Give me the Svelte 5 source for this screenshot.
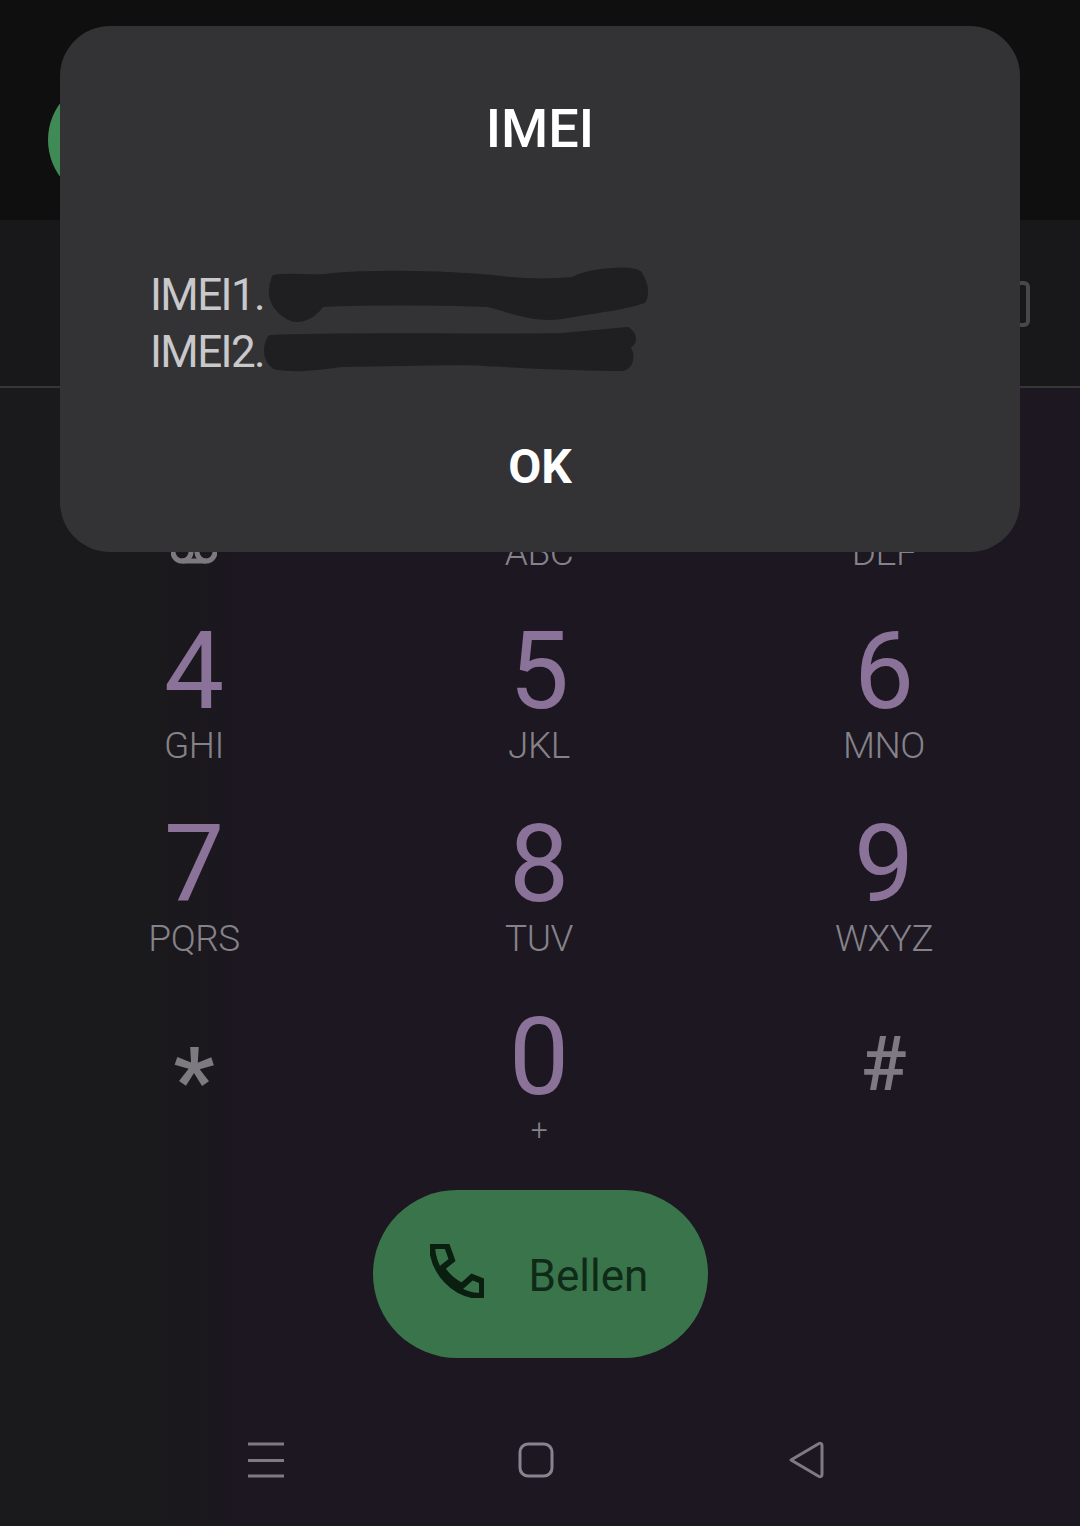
<script>
  let keys = [
    { digit: "", sub: "" },
    { digit: "", sub: "ABC" },
    { digit: "", sub: "DEF" },
    { digit: "4", sub: "GHI" },
    { digit: "5", sub: "JKL" },
    { digit: "6", sub: "MNO" },
    { digit: "7", sub: "PQRS" },
    { digit: "8", sub: "TUV" },
    { digit: "9", sub: "WXYZ" },
    { digit: "*", sub: "", symbol: "star" },
    { digit: "0", sub: "+" },
    { digit: "#", sub: "", symbol: "hash" }
  ];
</script>

<div class="screen">
  <header class="top">
    <div class="avatar"></div>
  </header>

  <div class="field">
    <div class="backspace"></div>
  </div>

  <div class="keypad">
    {#each keys as key, idx}
      <div class="key">
        {#if key.symbol}
          <span class="symbol {key.symbol}">{key.digit}</span>
        {:else}
          <span class="digit">{key.digit}</span>
        {/if}
        {#if idx === 0}
          <svg class="voicemail" width="46" height="46" viewBox="0 0 46 46" fill="none">
            <circle cx="11" cy="23" r="9" stroke="#7c797f" stroke-width="5" />
            <circle cx="35" cy="23" r="9" stroke="#7c797f" stroke-width="5" />
            <path d="M11 32H35" stroke="#7c797f" stroke-width="5" />
          </svg>
        {:else if key.sub}
          <span class="sub" class:plus={key.sub === "+"}>{key.sub}</span>
        {/if}
      </div>
    {/each}
  </div>

  <div class="call-row">
    <button class="call">
      <svg width="54" height="54" viewBox="0 0 54 54" fill="none">
        <path
          d="M2 2H17L22 16L12 24C16 31 24 38 32 42L42 33L52 37V52C24 52 3 28 2 2Z"
          stroke="#0a1f10"
          stroke-width="6"
        />
      </svg>
      <span>Bellen</span>
    </button>
  </div>

  <nav class="nav">
    <svg width="38" height="36" viewBox="0 0 38 36" fill="none">
      <path d="M1 2H37M1 18.500H37M1 34H37" stroke="#807a85" stroke-width="3" />
    </svg>
    <svg width="36" height="36" viewBox="0 0 36 36" fill="none">
      <rect x="2" y="2" width="32" height="32" rx="8" stroke="#8a838f" stroke-width="3" />
    </svg>
    <svg width="36" height="38" viewBox="0 0 36 38" fill="none">
      <path
        d="M3 19L31 2.500C32.500 1.800 34 2.500 34 4.500V33.500C34 35.500 32.500 36.200 31 35.500Z"
        stroke="#807a85"
        stroke-width="3"
        stroke-linejoin="round"
      />
    </svg>
  </nav>

  <div class="dialog">
    <h1>IMEI</h1>
    <div class="body">
      <div>IMEI1.</div>
      <div>IMEI2.</div>
      <svg class="scribble" width="400" height="120" viewBox="0 0 400 120" fill="none">
        <path
          d="M12 14C30 10 50 16 70 12C120 8 190 10 230 14C260 18 290 18 310 16C330 6 370 4 378 10C384 20 386 30 382 38C360 46 330 48 300 54C270 58 250 48 226 42C160 40 110 40 60 42C50 56 34 62 22 52C8 42 6 28 12 14Z"
          fill="#1f1e21"
          stroke="#1f1e21"
          stroke-width="4"
          stroke-linejoin="round"
        />
        <path
          d="M8 74C100 70 200 74 300 72L366 66C374 72 374 80 366 84C372 92 370 104 360 106C300 106 250 102 200 100L80 102C50 106 30 108 12 104C2 96 2 84 8 74Z"
          fill="#1f1e21"
          stroke="#1f1e21"
          stroke-width="4"
          stroke-linejoin="round"
        />
      </svg>
    </div>
    <div class="ok">OK</div>
  </div>
</div>

<style>
  :global(body) {
    margin: 0;
    background: #1c1820;
  }

  .screen {
    position: relative;
    width: 1080px;
    height: 1526px;
    overflow: hidden;
    display: flex;
    flex-direction: column;
    font-family: Roboto, "Liberation Sans", sans-serif;
    background: linear-gradient(90deg, #1a191b 0, #1a191b 150px, #1c1720 240px);
  }

  .top {
    height: 220px;
    flex-shrink: 0;
    background: #0f0f10;
    display: flex;
    align-items: center;
    padding: 60px 0 0 48px;
    box-sizing: border-box;
  }

  .avatar {
    width: 124px;
    height: 124px;
    border-radius: 50%;
    background: #3f8a55;
  }

  .field {
    height: 168px;
    flex-shrink: 0;
    box-sizing: border-box;
    display: flex;
    align-items: center;
    justify-content: flex-end;
    padding-right: 50px;
    background: #18171a;
    border-bottom: 2px solid #363538;
  }

  .backspace {
    width: 70px;
    height: 46px;
    box-sizing: border-box;
    border: 4px solid #48474a;
    border-radius: 6px;
    margin-top: 2px;
  }

  .keypad {
    display: grid;
    grid-template-columns: repeat(3, 345px);
    grid-auto-rows: 193px;
    justify-content: center;
    padding-top: 17px;
    margin-left: -2px;
  }

  .key {
    display: flex;
    flex-direction: column;
    align-items: center;
  }

  .digit {
    height: 126px;
    box-sizing: border-box;
    padding-top: 22px;
    line-height: 104px;
    font-size: 107px;
    font-weight: 400;
    color: #8a7299;
  }

  .sub {
    height: 44px;
    line-height: 44px;
    font-size: 37px;
    font-weight: 300;
    letter-spacing: -0.5px;
    color: #85828a;
  }

  .plus {
    height: 40px;
    line-height: 40px;
    font-size: 30px;
  }

  .voicemail {
    margin-top: -2px;
  }

  .symbol {
    color: #7e7a82;
    height: 132px;
  }

  .star {
    font-size: 90px;
    line-height: 132px;
    font-weight: 700;
    padding-top: 32px;
  }

  .hash {
    font-size: 76px;
    line-height: 132px;
    font-weight: 500;
    padding-top: 14px;
  }

  .call-row {
    display: flex;
    justify-content: center;
    margin-top: 13px;
  }

  .call {
    width: 335px;
    height: 168px;
    border: none;
    border-radius: 84px;
    background: #3a744b;
    display: flex;
    align-items: center;
    padding: 0 0 0 57px;
    gap: 45px;
    box-sizing: border-box;
    font-family: inherit;
    font-size: 44px;
    color: #0f2a17;
  }

  .call svg {
    margin-top: -6px;
  }

  .call span {
    margin-top: 4px;
  }

  .nav {
    display: grid;
    grid-template-columns: repeat(3, 270px);
    justify-content: center;
    justify-items: center;
    align-items: center;
    margin-top: 83px;
    margin-left: -8px;
  }

  .dialog {
    position: absolute;
    left: 60px;
    top: 26px;
    width: 960px;
    height: 526px;
    border-radius: 50px;
    background: #333336;
    display: flex;
    flex-direction: column;
  }

  h1 {
    margin: 0;
    padding-top: 73px;
    text-align: center;
    font-size: 54px;
    line-height: 60px;
    font-weight: 500;
    color: #fff;
  }

  .body {
    position: relative;
    margin-top: 108px;
    padding-left: 90px;
    font-size: 44px;
    line-height: 57px;
    letter-spacing: -1.6px;
    color: #c9c8ca;
  }

  .scribble {
    position: absolute;
    left: 202px;
    top: -4px;
  }

  .ok {
    margin-top: 58px;
    text-align: center;
    font-size: 48px;
    line-height: 56px;
    font-weight: 700;
    color: #fff;
  }
</style>
